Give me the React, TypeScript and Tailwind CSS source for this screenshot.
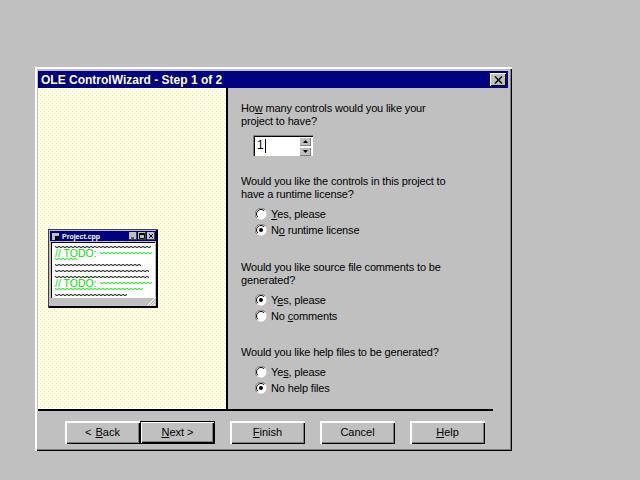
const font = "[font-family:'Liberation_Sans',Arial,sans-serif]";

function Radio({ checked }: { checked?: boolean }) {
  return (
    <svg width="12" height="12" viewBox="0 0 12 12" className="shrink-0">
      <circle cx="6" cy="6" r="5.5" fill="#fff" />
      <path d="M10 1.8A5.5 5.5 0 0 0 1.8 10" fill="none" stroke="#808080" strokeWidth="1" />
      <path d="M9.2 2.8A4.5 4.5 0 0 0 2.8 9.2" fill="none" stroke="#000" strokeWidth="1" />
      {checked && <circle cx="6" cy="6" r="2" fill="#000" />}
    </svg>
  );
}

function RadioRow({ checked, children }: { checked?: boolean; children: React.ReactNode }) {
  return (
    <div className="flex h-4 items-center pl-[14px]">
      <Radio checked={checked} />
      <span className="ml-[4px] leading-[13px]">{children}</span>
    </div>
  );
}

function Button({ children, isDefault, className = '' }: { children: React.ReactNode; isDefault?: boolean; className?: string }) {
  return (
    <div
      className={`flex h-[23px] w-[75px] items-center justify-center bg-[#c0c0c0] text-[11px] text-black ${
        isDefault
          ? 'border border-black shadow-[inset_1px_1px_0_#fff,inset_-1px_-1px_0_#000,inset_-2px_-2px_0_#808080]'
          : 'shadow-[inset_2px_2px_0_#fff,inset_-1px_-1px_0_#000,inset_-2px_-2px_0_#808080]'
      } ${className}`}
    >
      {children}
    </div>
  );
}

function SpinPart({ up }: { up?: boolean }) {
  return (
    <div className="flex h-[9px] w-3 items-center justify-center bg-[#c0c0c0] shadow-[inset_1px_1px_0_#fff,inset_-1px_-1px_0_#808080]">
      <svg width="5" height="3" viewBox="0 0 5 3">
        <path d={up ? 'M2.5 0L5 3H0Z' : 'M0 0H5L2.5 3Z'} fill="#000" />
      </svg>
    </div>
  );
}

function Squiggles() {
  const wave = (x: number, y: number, w: number, color: string) => {
    let d = `M${x} ${y}`;
    for (let i = 2; i <= w; i += 2) d += `L${x + i} ${y + (i % 4 === 2 ? 1 : 0)}`;
    return <path key={`${x}-${y}`} d={d} stroke={color} strokeWidth="1" fill="none" />;
  };
  return (
    <svg width="103" height="55" viewBox="0 0 103 55" className="block">
      {wave(3, 3.5, 96, '#000')}
      <text x="3" y="14" fontSize="10.5" fill="#00e000" fontFamily="'Liberation Sans'">// TODO:</text>
      {wave(48, 9.5, 52, '#00e000')}
      {wave(3, 15.5, 23, '#00e000')}
      {wave(3, 21.5, 86, '#000')}
      {wave(3, 27.5, 94, '#000')}
      {wave(3, 33.5, 94, '#000')}
      <text x="3" y="44" fontSize="10.5" fill="#00e000" fontFamily="'Liberation Sans'">// TODO:</text>
      {wave(48, 39.5, 52, '#00e000')}
      {wave(3, 45.5, 89, '#00e000')}
      {wave(3, 51.5, 73, '#000')}
    </svg>
  );
}

function TitleGlyph({ children }: { children: React.ReactNode }) {
  return (
    <div className="flex h-[8px] w-[8px] items-center justify-center bg-[#c0c0c0] shadow-[inset_-1px_-1px_0_#404040]">
      <svg width="6" height="6" viewBox="0 0 6 6">{children}</svg>
    </div>
  );
}

function PreviewWindow() {
  return (
    <div className="flex h-[79px] w-[110px] flex-col bg-[#c0c0c0] p-[2px] shadow-[inset_1px_1px_0_#404040,inset_-2px_-2px_0_#000]">
      <div className="flex h-[10px] items-center bg-[#000080] pl-[2px] pr-[1px]">
        <div className="flex h-[7px] w-[7px] items-end justify-end bg-[#c0c0c0]">
          <div className="h-[4px] w-[4px] bg-black" />
        </div>
        <span className="ml-[3px] text-[7px] font-bold leading-none text-white">Project.cpp</span>
        <div className="ml-auto flex gap-px">
          <TitleGlyph><path d="M1 5H4" stroke="#000" /></TitleGlyph>
          <TitleGlyph><path d="M0.5 0.5H5.5V5.5H0.5ZM0.5 1.5H5.5" stroke="#000" fill="none" /></TitleGlyph>
          <TitleGlyph><path d="M1 1L5 5M5 1L1 5" stroke="#000" /></TitleGlyph>
        </div>
      </div>
      <div className="mt-[1px] ml-px h-[56px] w-[104px] border-l border-t border-black bg-white">
        <Squiggles />
      </div>
      <div className="flex flex-1 items-end justify-end pr-[1px]">
        <svg width="9" height="8" viewBox="0 0 9 8">
          <path d="M1 8L9 0M4 8L9 3M7 8L9 6" stroke="#fff" />
        </svg>
      </div>
    </div>
  );
}

export default function App() {
  return (
    <div className={`h-[480px] w-[640px] overflow-hidden bg-[#c0c0c0] pl-[35px] pt-[67px] text-[11px] text-black ${font}`}>
      <div className="flex h-[384px] w-[477px] flex-col bg-[#c0c0c0] pl-[3px] pt-[4px] shadow-[inset_2px_2px_0_#fff,inset_-1px_-1px_0_#000,inset_-2px_-2px_0_#808080]">
        <div className="flex h-[17px] w-[470px] items-center bg-[#000080] pl-[3px] pr-[2px]">
          <span className="text-[12px] font-bold leading-none text-white">OLE ControlWizard - Step 1 of 2</span>
          <div className="ml-auto flex h-[13px] w-4 items-center justify-center bg-[#c0c0c0] shadow-[inset_1px_1px_0_#fff,inset_-1px_-1px_0_#000]">
            <svg width="9" height="8" viewBox="0 0 9 8">
              <path d="M1 0.5L8 7.5M8 0.5L1 7.5" stroke="#000" strokeWidth="1.4" />
            </svg>
          </div>
        </div>

        <div className="flex h-[321px] w-[455px]">
          <div className="relative w-[188px] pl-[10px] pt-[141px]">
            <svg className="absolute inset-0 h-full w-full" shapeRendering="crispEdges">
              <defs>
                <pattern id="dither" width="4" height="4" patternUnits="userSpaceOnUse">
                  <rect width="4" height="4" fill="#fff" />
                  <rect x="0" y="1" width="1" height="1" fill="#ffff00" />
                  <rect x="2" y="3" width="1" height="1" fill="#ffff00" />
                </pattern>
              </defs>
              <rect width="100%" height="100%" fill="url(#dither)" />
            </svg>
            <div className="relative">
              <PreviewWindow />
            </div>
          </div>
          <div className="w-[2px] bg-black" />
          <div className="flex-1 pl-[13px] pt-[14px] leading-[13px] tracking-[-0.15px]">
            <p>Ho<u>w</u> many controls would you like your<br />project to have?</p>
            <div className="relative ml-[12px] mt-[7px] flex h-[21px] w-[60px] items-center bg-white pl-[4px] shadow-[inset_1px_1px_0_#808080,inset_2px_2px_0_#000]">
              <span className="text-[12px]">1</span>
              <div className="ml-[1px] h-[14px] w-px bg-black" />
              <div className="absolute right-[2px] top-[2px] flex flex-col gap-px">
                <SpinPart up />
                <SpinPart />
              </div>
            </div>

            <p className="mt-[19px]">Would you like the controls in this project to<br />have a runtime license?</p>
            <div className="mt-[5px]">
              <RadioRow><u>Y</u>es, please</RadioRow>
              <RadioRow checked>N<u>o</u> runtime license</RadioRow>
            </div>

            <p className="mt-[23px]">Would you like source file comments to be<br />generated?</p>
            <div className="mt-[5px]">
              <RadioRow checked>Y<u>e</u>s, please</RadioRow>
              <RadioRow>No <u>c</u>omments</RadioRow>
            </div>

            <p className="mt-[22px]">Would you like help files to be generated?</p>
            <div className="mt-[5px]">
              <RadioRow>Ye<u>s</u>, please</RadioRow>
              <RadioRow checked>No help files</RadioRow>
            </div>
          </div>
        </div>

        <div className="h-[2px] w-[455px] bg-black" />

        <div className="flex pl-[27px] pt-[10px]">
          <Button>&lt; <u className="ml-1">B</u>ack</Button>
          <Button isDefault><u>N</u>ext &gt;</Button>
          <Button className="ml-[15px]"><u>F</u>inish</Button>
          <Button className="ml-[15px]">Cancel</Button>
          <Button className="ml-[15px]"><u>H</u>elp</Button>
        </div>
      </div>
    </div>
  );
}
